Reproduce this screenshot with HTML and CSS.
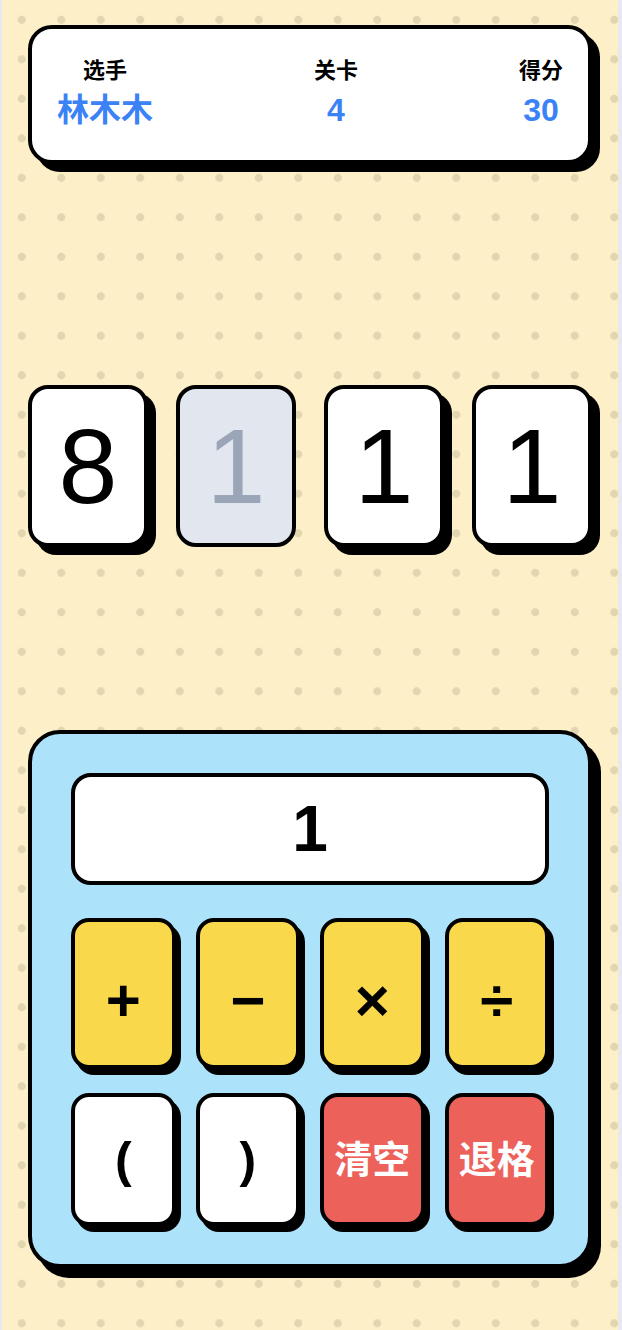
FILE: index.html
```html
<!DOCTYPE html>
<html lang="zh-CN">
<head>
  <meta charset="UTF-8" />
  <meta name="viewport" content="width=device-width, initial-scale=1.0" />
  <title>24 点</title>
  <link rel="stylesheet" href="styles.css">
</head>
<body>
  <div class="page">
    <!-- Player info -->
    <header class="scoreboard">
      <div class="stat">
        <div class="stat-label">选手</div>
        <div class="stat-value">林木木</div>
      </div>
      <div class="stat">
        <div class="stat-label">关卡</div>
        <div class="stat-value">4</div>
      </div>
      <div class="stat">
        <div class="stat-label">得分</div>
        <div class="stat-value">30</div>
      </div>
    </header>

    <!-- Number cards -->
    <section class="cards">
      <div class="card">8</div>
      <div class="card card-used">1</div>
      <div class="card">1</div>
      <div class="card">1</div>
    </section>

    <!-- Calculator -->
    <section class="calc">
      <div class="display">1</div>
      <div class="keys">
        <button class="key key-op">+</button>
        <button class="key key-op">&minus;</button>
        <button class="key key-op">&times;</button>
        <button class="key key-op">&divide;</button>
        <button class="key key-paren">(</button>
        <button class="key key-paren">)</button>
        <button class="key key-danger">清空</button>
        <button class="key key-danger">退格</button>
      </div>
    </section>
  </div>
</body>
</html>
```

FILE: styles.css
```css
html {
  background: #e6e9ee;
}

body {
  margin: 0;
  font-family: "Liberation Sans", "Noto Sans CJK SC", sans-serif;
  color: #000;
}

.page {
  box-sizing: border-box;
  width: 616px;
  min-height: 1330px;
  margin-left: 2px;
  padding: 25px 26px 0;
  background-color: #fdefc7;
  background-image: radial-gradient(circle, #e1d6b0 3.7px, transparent 4.3px);
  background-size: 39.5px 39.5px;
}

.scoreboard {
  display: flex;
  justify-content: space-between;
  padding: 27px 25px 28px;
  background: #fff;
  border: 4px solid #000;
  border-radius: 24px;
  box-shadow: 8px 8px 0 #000;
}

.stat {
  text-align: center;
}

.stat-label {
  font-size: 22px;
  font-weight: bold;
  line-height: 30px;
}

.stat-value {
  margin-top: 2px;
  font-size: 32px;
  font-weight: bold;
  line-height: 44px;
  color: #3b82f6;
}

.cards {
  display: grid;
  grid-template-columns: repeat(4, 1fr);
  gap: 28px;
  margin-top: 221px;
}

.card {
  box-sizing: border-box;
  height: 162px;
  display: flex;
  align-items: center;
  justify-content: center;
  background: #fff;
  border: 4px solid #000;
  border-radius: 20px;
  box-shadow: 8px 8px 0 #000;
  font-size: 106px;
  line-height: 1;
}

.card-used {
  background: #e2e7ef;
  color: #9aa5b8;
  box-shadow: none;
}

.calc {
  margin-top: 183px;
  padding: 39px 39px 38px;
  background: #ade3fa;
  border: 4px solid #000;
  border-radius: 32px;
  box-shadow: 9px 10px 0 #000;
}

.display {
  box-sizing: border-box;
  height: 112px;
  display: flex;
  align-items: center;
  justify-content: center;
  background: #fff;
  border: 4px solid #000;
  border-radius: 20px;
  font-size: 64px;
  font-weight: bold;
  line-height: 1;
  margin-bottom: 33px;
}

.keys {
  display: grid;
  grid-template-columns: repeat(4, 1fr);
  grid-template-rows: 151px 133px;
  column-gap: 20px;
  row-gap: 24px;
}

.key {
  display: flex;
  align-items: center;
  justify-content: center;
  padding: 0;
  font-family: inherit;
  font-weight: bold;
  line-height: 1;
  color: #000;
  border: 4px solid #000;
  border-radius: 18px;
  box-shadow: 5px 6px 0 #000;
  cursor: pointer;
}

.key-op {
  padding-top: 14px;
  background: #f9d84b;
  font-size: 60px;
}

.key-paren {
  background: #fff;
  font-size: 50px;
}

.key-danger {
  background: #ec625b;
  color: #fff;
  font-size: 38px;
}
```
